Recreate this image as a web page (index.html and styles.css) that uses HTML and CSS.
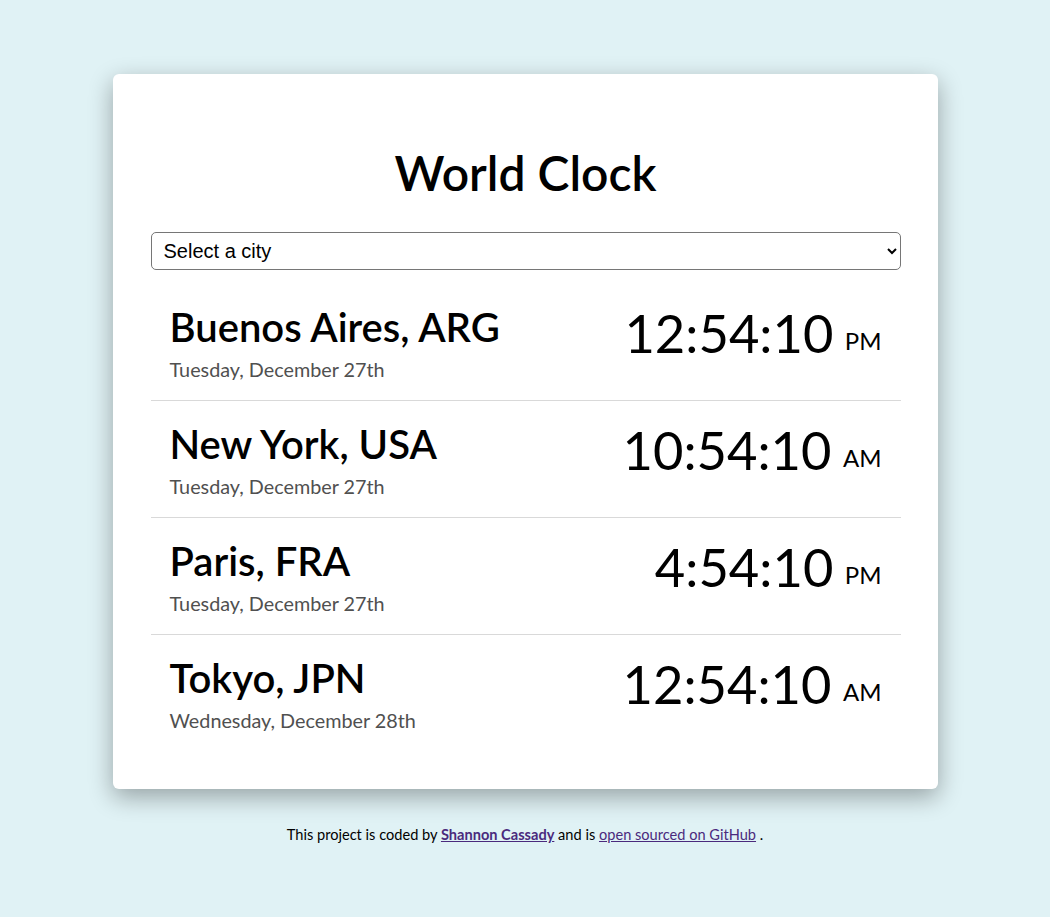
FILE: index.html
```html
<!DOCTYPE html>
<html lang="en">
<head>
<meta charset="utf-8">
<title>World Clock</title>
<link rel="stylesheet" href="styles.css">
</head>
<body>
<div class="page">
  <div class="card">
    <h1 class="title">World Clock</h1>
    <select class="city-select">
      <option>Select a city</option>
    </select>
    <div class="cities">
      <div class="city">
        <div class="info">
          <h2 class="name">Buenos Aires, ARG</h2>
          <div class="date">Tuesday, December 27th</div>
        </div>
        <div class="time">12:54:10 <small>PM</small></div>
      </div>
      <div class="city">
        <div class="info">
          <h2 class="name">New York, USA</h2>
          <div class="date">Tuesday, December 27th</div>
        </div>
        <div class="time">10:54:10 <small>AM</small></div>
      </div>
      <div class="city">
        <div class="info">
          <h2 class="name">Paris, FRA</h2>
          <div class="date">Tuesday, December 27th</div>
        </div>
        <div class="time">4:54:10 <small>PM</small></div>
      </div>
      <div class="city">
        <div class="info">
          <h2 class="name">Tokyo, JPN</h2>
          <div class="date">Wednesday, December 28th</div>
        </div>
        <div class="time">12:54:10 <small>AM</small></div>
      </div>
    </div>
  </div>
  <footer class="footer">
    This project is coded by <a class="author" href="#">Shannon Cassady</a> and is <a class="repo" href="#">open sourced on GitHub</a> .
  </footer>
</div>
</body>
</html>
```

FILE: styles.css
```css
* { box-sizing: border-box; }
html, body {
  margin: 0;
  padding: 0;
}
body {
  background: #e0f2f5;
  font-family: Lato, "Open Sans", sans-serif;
  color: #000;
}
.page {
  width: 825px;
  margin: 0 auto;
  padding-top: 74px;
}
.card {
  background: #fff;
  border-radius: 6px;
  box-shadow: 0 8px 24px rgba(0, 0, 0, 0.33);
  padding: 70px 37px 38px 38px;
}
.title {
  margin: 0 0 30px;
  text-align: center;
  font-size: 48px;
  font-weight: 600;
  line-height: 58px;
}
.city-select {
  display: block;
  width: 100%;
  height: 38px;
  font-family: "Liberation Sans", Arial, sans-serif;
  font-size: 20px;
  padding: 0 8px;
  border: 1px solid #767676;
  border-radius: 5px;
  background: #fff;
  color: #000;
}
.cities {
  margin-top: 14px;
}
.city {
  display: flex;
  justify-content: space-between;
  align-items: flex-start;
  padding: 19px 19px 19px 19px;
  border-bottom: 1px solid #d9d9d9;
}
.city:last-child {
  border-bottom: none;
}
.name {
  margin: 0;
  font-size: 40px;
  font-weight: 600;
  line-height: 48px;
}
.date {
  margin-top: 6px;
  font-size: 19.8px;
  color: #505050;
  line-height: 24px;
}
.time {
  margin-top: 0;
  font-size: 52.5px;
  line-height: 60px;
  white-space: nowrap;
}
.time small {
  font-size: 24px;
  vertical-align: 3px;
  margin-left: -2px;
}
.footer {
  text-align: center;
  font-size: 14.6px;
  margin-top: 37px;
}
.footer a {
  color: #4a2a7d;
}
.footer .author {
  font-weight: bold;
}
```
